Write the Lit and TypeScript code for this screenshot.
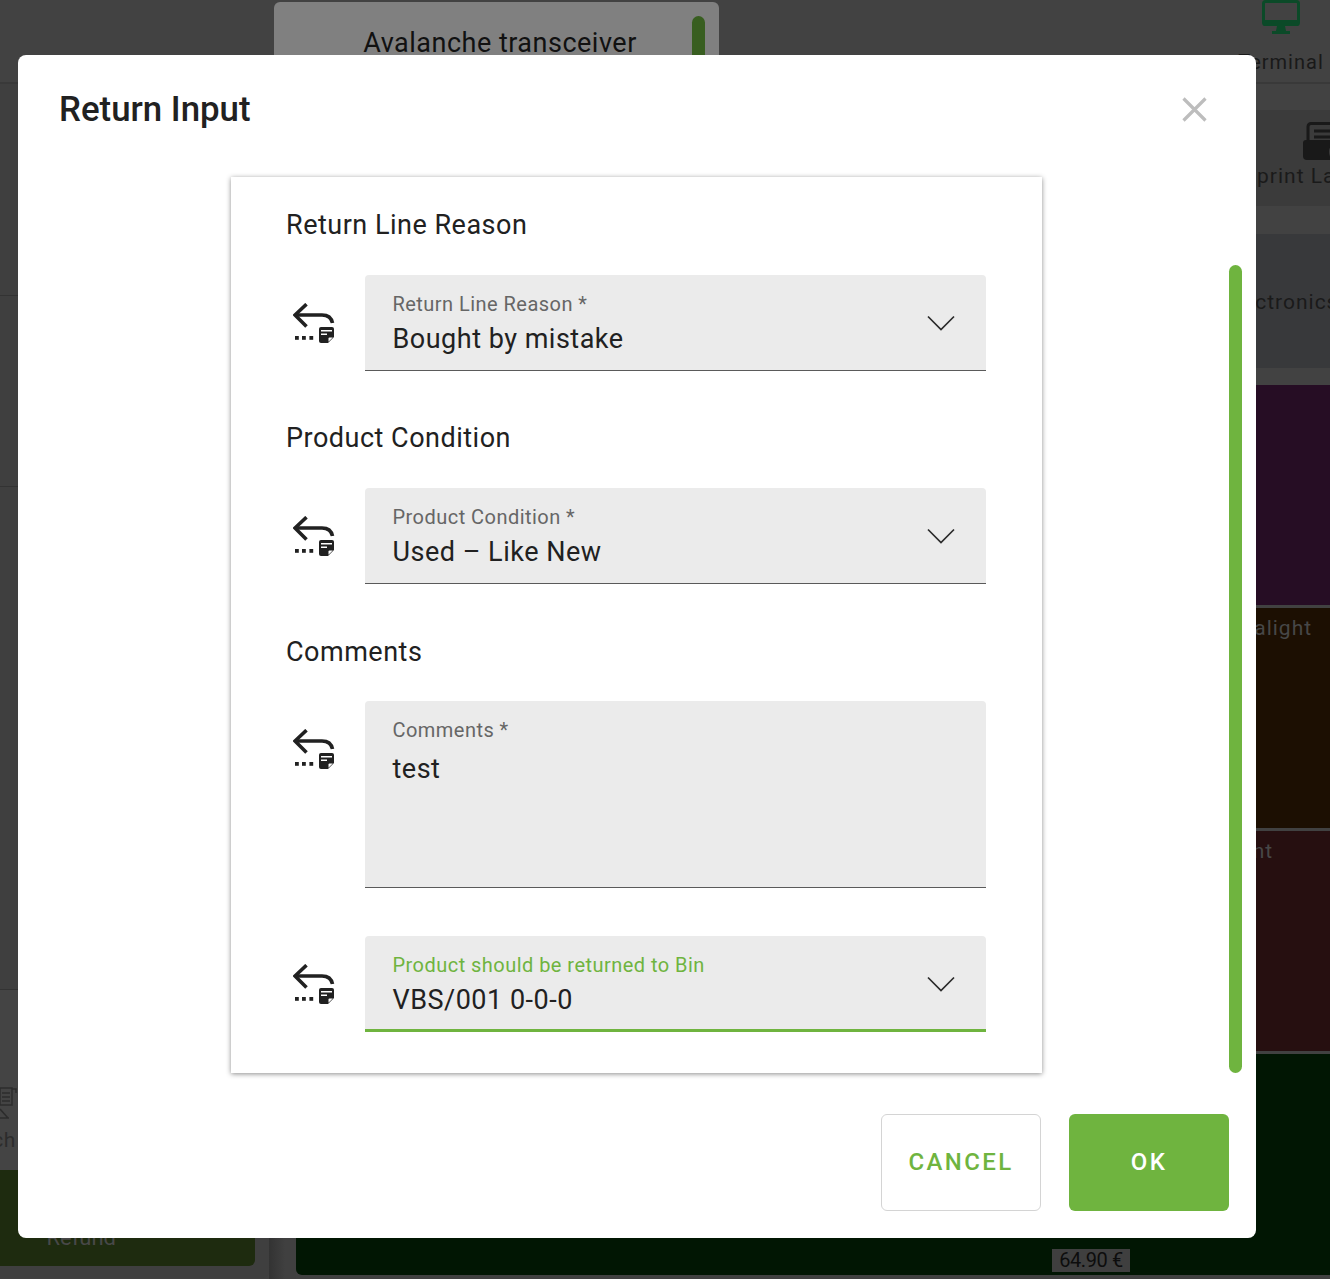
import { LitElement, html, css, svg } from "lit";
import { customElement } from "lit/decorators.js";

const returnIcon = html`<svg class="ricon" width="42" height="40" viewBox="0 0 42 40" fill="none" aria-hidden="true">
  <path d="M13.500 1.200 2 12 13.500 23.500" stroke="#212121" stroke-width="3.600"/>
  <path d="M2 12H29c6 0 9.500 3 10.500 8" stroke="#212121" stroke-width="3.600"/>
  <rect x="2" y="33" width="3.800" height="3.800" fill="#212121"/>
  <rect x="9" y="33" width="3.800" height="3.800" fill="#212121"/>
  <rect x="16.400" y="33" width="3.800" height="3.800" fill="#212121"/>
  <path d="M28 24h11a2 2 0 0 1 2 2v8l-6 6h-7a2 2 0 0 1-2-2V26a2 2 0 0 1 2-2Z" fill="#212121"/>
  <path d="M28 27.700h11M28 31.300h6" stroke="#fff" stroke-width="1.400"/>
  <path d="M39.800 34.500h-3.300a1 1 0 0 0-1 1v3.300Z" fill="#fff"/>
</svg>`;

const chevron = html`<svg class="chev" width="28" height="16" viewBox="0 0 28 16" fill="none" aria-hidden="true"><path d="M1 1.500 14 14.500 27 1.500" stroke="#2b2b2b" stroke-width="1.700"/></svg>`;

const monitor = svg`<rect x="1.500" y="1.500" width="35" height="23" rx="2" fill="none" stroke="#0b4a28" stroke-width="3"/><path d="M1 20h36v4a2 2 0 0 1-2 2H3a2 2 0 0 1-2-2ZM15 26h8l1 5h4v3H10v-3h4Z" fill="#0b4a28"/>`;

@customElement("app-root")
export class AppRoot extends LitElement {
  static styles = css`
    :host { display: block; width: 1330px; height: 1279px; position: relative; overflow: hidden; background: #414141;
      font-family: Roboto, "Liberation Sans", sans-serif; color: #212121; }
    * { box-sizing: border-box; }

    /* dimmed application behind the dialog */
    .app { display: flex; flex-direction: column; height: 1279px; }
    .topbar { height: 84px; flex: none; display: flex; background: #424242; border-bottom: 2px solid #393939; overflow: hidden; }
    .article { margin: 2px 0 0 274px; width: 445px; height: 90px; flex: none; background: #808080; border-radius: 6px; position: relative;
      font-size: 27px; letter-spacing: 0.5px; text-align: center; padding: 25px 0 0 7px; color: #111; }
    .article-bar { position: absolute; right: 14px; top: 14px; width: 13px; height: 70px; border-radius: 7px; background: #385e20; }
    .terminal { margin-left: auto; width: 98px; display: flex; flex-direction: column; align-items: center; font-size: 20px; letter-spacing: 1px; color: #191919; line-height: 26px; }
    .terminal svg { display: block; margin-bottom: 14px; flex: none; }
    .lower { flex: 1; display: flex; min-height: 0; }
    .left { width: 269px; flex: none; display: flex; flex-direction: column; background: #3f3f3f; border-radius: 0 0 6px 0; margin-bottom: 1px; }
    .lp { border-bottom: 1px solid #333; flex: none; }
    .lp1 { height: 212px; }
    .lp2 { height: 191px; }
    .lp3 { height: 503px; }
    .lp4 { height: 180px; background: #444; border: 0; padding-top: 97px; color: #2c2c2c; }
    .lp4 svg { display: block; margin-left: -1px; }
    .lp-text { width: 16px; display: flex; justify-content: flex-end; overflow: hidden; font-size: 21px; letter-spacing: 0.6px; line-height: 26px; margin-top: 7px; white-space: nowrap; }
    .refund { width: 255px; height: 96px; background: #1e2b0f; border-radius: 0 0 6px 0; color: #484848; font-size: 22px; text-align: right; padding: 55px 139px 0 0; flex: none; }
    .gutter { width: 27px; flex: none; background: linear-gradient(90deg, #333, #404040 60%); }
    .main { flex: 1; min-width: 0; display: flex; flex-direction: column; }
    .tile { overflow: hidden; white-space: nowrap; flex: none; font-size: 21px; letter-spacing: 1px; }
    .gap { height: 26px; flex: none; background: #424242; }
    .gap2 { height: 28px; flex: none; background: #424242; }
    .t-print { height: 96px; background: #3b3b3b; color: #1a1a1a; padding: 0 0 0 935px; display: flex; flex-direction: column; }
    .t-print svg { margin: 12px 0 4px 72px; flex: none; }
    .t-elec { height: 134px; background: #38393b; color: #1a1a1a; padding: 56px 0 0 928px; }
    .t-strip { height: 17px; flex: none; background: #424242; }
    .t-purple { height: 220px; background: #260d24; margin-bottom: 3px; }
    .t-brown { height: 220px; background: #1c0f02; color: #474747; padding: 8px 0 0 933px; margin-bottom: 3px; }
    .t-red { height: 220px; background: #260f10; color: #474747; padding: 8px 0 0 868px; margin-bottom: 3px; }
    .t-green { height: 221px; background: #011603; border-radius: 0 0 0 6px; display: flex; align-items: flex-end; justify-content: center; padding-left: 556px; padding-bottom: 3px; }
    .price { background: #3f3f3f; color: #0d0d0d; font-size: 20px; letter-spacing: -0.4px; line-height: 23px; padding: 0 7px; }

    /* dialog */
    .dialog { position: absolute; left: 18px; top: 55px; width: 1238px; height: 1183px; background: #fff; border-radius: 8px; display: flex; flex-direction: column; }
    .head { height: 108px; flex: none; display: flex; align-items: center; justify-content: space-between; padding: 0 49px 0 41px; margin-bottom: 14px; }
    h1 { margin: 0; font-size: 34.800px; font-weight: 500; color: #212121; }
    .close { display: block; }
    .body { flex: none; display: grid; grid-template-columns: 811px 13px; justify-content: space-between; padding: 0 14px 0 213px; height: 896px; }
    .card { background: #fff; box-shadow: 0 1px 5px rgba(0,0,0,.45); padding: 32px 56px 41px 55px; display: flex; flex-direction: column; }
    .scroll { align-self: end; height: 808px; background: #6fb43f; border-radius: 7px; }
    h2 { margin: 0 0 34px; font-size: 27px; line-height: 32px; font-weight: 400; letter-spacing: 0.5px; color: #212121; }
    h2.low { padding-top: 1px; margin-bottom: 33px; }
    .row { display: grid; grid-template-columns: 79px 1fr; margin-bottom: 51px; }
    .row.tall { margin-bottom: 48px; }
    .row.last { margin-bottom: 0; }
    .ricon { margin: 28px 0 0 7px; display: block; }
    .field { height: 96px; background: #ebebeb; border-radius: 4px 4px 0 0; border-bottom: 1px solid #5a5a5a; padding: 17px 31px 0 27.500px; display: flex; align-items: center; justify-content: space-between; }
    .field.area { height: 187px; align-items: flex-start; }
    .field.on { border-bottom: 3px solid #6fb43f; }
    .txt { display: flex; flex-direction: column; align-self: flex-start; }
    .lab { font-size: 20px; line-height: 24px; color: #666; letter-spacing: 0.46px; }
    .on .lab { color: #6fb43f; }
    .val { font-size: 27px; line-height: 34px; margin-top: 6px; color: #212121; letter-spacing: 0.5px; }
    .area .val { margin-top: 10px; }
    .chev { margin-bottom: 16px; }
    .on .chev { margin-bottom: 14px; }

    .foot { display: flex; justify-content: flex-end; gap: 28px; padding: 41px 27px 0 0; }
    .btn { width: 160px; height: 97px; border-radius: 6px; display: flex; align-items: center; justify-content: center; font-size: 24px; font-weight: 500; letter-spacing: 2.400px; font-family: inherit; padding: 0 0 2px; }
    .cancel { background: #fff; border: 1px solid #d4d4d4; color: #6fb43f; }
    .ok { background: #6fb43f; border: 0; color: #fff; }
  `;

  private row(label: string, value: string, cls = "", rowCls = "") {
    return html`<div class="row ${rowCls}">
      ${returnIcon}
      <div class="field ${cls}">
        <div class="txt"><span class="lab">${label}</span><span class="val">${value}</span></div>
        ${cls.includes("area") ? "" : chevron}
      </div>
    </div>`;
  }

  render() {
    return html`
      <div class="app">
        <div class="topbar">
          <div class="article">Avalanche transceiver<div class="article-bar"></div></div>
          <div class="terminal">
            <svg width="38" height="35" viewBox="0 0 38 35">${monitor}</svg>
            <span>Terminal</span>
          </div>
        </div>
        <div class="lower">
          <div class="left">
            <div class="lp lp1"></div>
            <div class="lp lp2"></div>
            <div class="lp lp3"></div>
            <div class="lp lp4">
              <svg width="18" height="33" viewBox="0 0 18 33" fill="none" stroke="#2c2c2c" stroke-width="1.500"><path d="M1 1h12v17H1ZM3 6h8M3 10h8M3 14h8M13 2h4v4"/><path d="M1 22l8 9M1 31h9"/></svg>
              <div class="lp-text"><span>Search</span></div>
            </div>
            <div class="refund">Refund</div>
          </div>
          <div class="gutter"></div>
          <div class="main">
            <div class="gap"></div>
            <div class="tile t-print">
              <svg width="50" height="38" viewBox="0 0 50 38"><path d="M8 1.500h28a3 3 0 0 1 3 3V20H5V4.500a3 3 0 0 1 3-3Z" fill="none" stroke="#191919" stroke-width="3"/><path d="M11 9h22M11 15h22" stroke="#191919" stroke-width="3"/><path d="M3 18h40v20H4a4 4 0 0 1-4-4V21a3 3 0 0 1 3-3Z" fill="#191919"/><circle cx="36" cy="30" r="10" fill="#3b3b3b"/><path d="M38 24l-7 6 7 6Z" fill="#191919"/></svg>
              <span>Reprint Label</span>
            </div>
            <div class="gap2"></div>
            <div class="tile t-elec">Electronics</div>
            <div class="t-strip"></div>
            <div class="tile t-purple"></div>
            <div class="tile t-brown">Avalight</div>
            <div class="tile t-red">Equipment</div>
            <div class="tile t-green"><span class="price">64.90 €</span></div>
          </div>
        </div>
      </div>

      <div class="dialog" role="dialog">
        <div class="head">
          <h1>Return Input</h1>
          <svg class="close" width="25" height="25" viewBox="0 0 25 25" aria-label="Close"><path d="M1.500 1.500 23.500 23.500M23.500 1.500 1.500 23.500" stroke="#bdbdbd" stroke-width="3.200"/></svg>
        </div>
        <div class="body">
          <div class="card">
            <h2>Return Line Reason</h2>
            ${this.row("Return Line Reason *", "Bought by mistake")}
            <h2>Product Condition</h2>
            ${this.row("Product Condition *", "Used – Like New")}
            <h2 class="low">Comments</h2>
            ${this.row("Comments *", "test", "area", "tall")}
            ${this.row("Product should be returned to Bin", "VBS/001 0-0-0", "on", "last")}
          </div>
          <div class="scroll"></div>
        </div>
        <div class="foot">
          <button class="btn cancel">CANCEL</button>
          <button class="btn ok">OK</button>
        </div>
      </div>
    `;
  }
}
